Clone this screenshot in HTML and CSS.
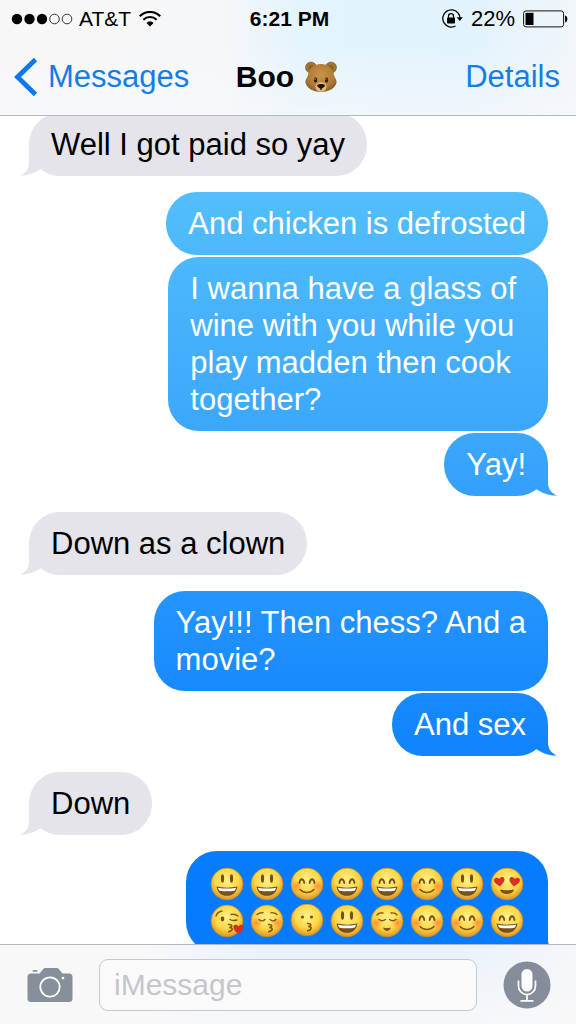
FILE: index.html
```
<!DOCTYPE html>
<html lang="en">
<head>
<meta charset="utf-8">
<meta name="viewport" content="width=device-width, initial-scale=1">
<title>Messages</title>
<link rel="stylesheet" href="styles.css">
</head>
<body>
<svg class="defs" aria-hidden="true">
  <defs>
    <radialGradient id="skin" cx="50%" cy="38%" r="62%">
      <stop offset="0" stop-color="#fff08a"/><stop offset=".6" stop-color="#fdd745"/><stop offset="1" stop-color="#dc9426"/>
    </radialGradient>
    <radialGradient id="blush"><stop offset="0" stop-color="#ff7637" stop-opacity=".75"/><stop offset="1" stop-color="#ff8a37" stop-opacity="0"/></radialGradient>
    <radialGradient id="fur" cx="50%" cy="40%" r="60%"><stop offset="0" stop-color="#c99545"/><stop offset=".7" stop-color="#b17c35"/><stop offset="1" stop-color="#87602c"/></radialGradient>
    <g id="face"><circle cx="17" cy="17" r="16" fill="url(#skin)" stroke="#b98329" stroke-width=".7"/></g>
    <g id="cheeks"><circle cx="6.500" cy="19" r="6" fill="url(#blush)"/><circle cx="27.500" cy="19" r="6" fill="url(#blush)"/></g>
    <g id="arcs" fill="none" stroke="#75501a" stroke-width="1.800" stroke-linecap="round"><path d="M9.500 16c.5-5 4-5 4.800 0M19.700 16c.6-5 4-5 4.800 0"/></g>
    <g id="grin"><path d="M6.500 19.500c7 1.500 14 1.500 21 0-.8 6-5 9.300-10.500 9.300S7.300 25.500 6.500 19.500z" fill="#77501c"/><path d="M8 20.700c6 1.200 12 1.200 18 0-.4 1.800-1 2.700-1.700 3-4.800.8-9.800.8-14.600 0-.8-.4-1.400-1.500-1.700-3z" fill="#fff"/></g>
    <g id="pucker" fill="none" stroke="#81551b" stroke-width="1.500" stroke-linecap="round"><path d="M17.500 20.500c4-.2 4.500 2 .8 3 4 0 4 3-.6 4.200"/></g>
    <path id="heart" d="M0 5C-3 2.500-5.500.5-5.200-2-5-4.600-1.500-5 0-2.400 1.500-5 5-4.600 5.200-2 5.500.5 3 2.500 0 5z" fill="#d92f20"/>
    <symbol id="smiley" viewBox="0 0 34 34"><use href="#face"/><g fill="#75501a"><ellipse cx="12.500" cy="11.500" rx="1.600" ry="4.200"/><ellipse cx="21.500" cy="11.500" rx="1.600" ry="4.200"/></g><use href="#grin"/></symbol>
    <symbol id="laugh" viewBox="0 0 34 34"><use href="#face"/><use href="#arcs"/><use href="#grin"/></symbol>
    <symbol id="blushing" viewBox="0 0 34 34"><use href="#face"/><use href="#cheeks"/><use href="#arcs"/><path d="M10 22.500c4 4 10 4 14 0" fill="none" stroke="#81551b" stroke-width="1.600" stroke-linecap="round"/></symbol>
    <symbol id="hearteyes" viewBox="0 0 34 34"><use href="#face"/><use href="#heart" transform="translate(9.500 14.500) rotate(-8)"/><use href="#heart" transform="translate(24.500 14.500) rotate(8)"/><path d="M10 22.500c4 1 10 1 14 0-1 6-13 6-14 0z" fill="#77501c"/></symbol>
    <symbol id="kissheart" viewBox="0 0 34 34"><use href="#face"/><path d="M6 12c1-3 3-4.500 6-5M21 10.500c3-.8 5-.2 7 1.500M20 15.500c2 1.300 4 1.300 7 .5" fill="none" stroke="#81551b" stroke-width="1.400" stroke-linecap="round"/><ellipse cx="12.500" cy="15" rx="1.800" ry="2.400" fill="#75501a"/><use href="#pucker" transform="translate(1 0)"/><use href="#heart" transform="translate(28.500 25)"/></symbol>
    <symbol id="kissclosed" viewBox="0 0 34 34"><use href="#face"/><use href="#cheeks"/><path d="M7 10.500c2-1.500 4-2 6-1.800M21 8.700c2.500-.2 4.500.4 6 1.800M9 15.500c2 1.600 4.500 1.600 6 0M20 15.500c2 1.600 4.500 1.600 6 0" fill="none" stroke="#81551b" stroke-width="1.400" stroke-linecap="round"/><use href="#pucker" transform="translate(1 0)"/></symbol>
    <symbol id="kiss" viewBox="0 0 34 34"><g transform="translate(0 -1)"><use href="#face"/><circle cx="12.500" cy="14" r="1.600" fill="#75501a"/><circle cx="21.500" cy="14" r="1.600" fill="#75501a"/><use href="#pucker"/></g></symbol>
    <symbol id="relaxed" viewBox="0 0 34 34"><use href="#face"/><use href="#cheeks"/><path d="M7 11c1-1.500 3-2.500 6-2M21 9c3-.5 5 .5 6 2M9 15.500c2 1.600 4.500 1.600 6.500 0M19.500 15.500c2 1.600 4.500 1.600 6.500 0" fill="none" stroke="#81551b" stroke-width="1.400" stroke-linecap="round"/><path d="M13 23.500c2.500.8 5.500.8 8 0-1.500 4.500-6.500 4.500-8 0z" fill="#81551b"/></symbol>
  </defs>
</svg>

<header class="top">
  <div class="status">
    <div class="status-left">
      <svg class="dots" width="62" height="12" viewBox="0 0 62 12" role="img" aria-label="Signal: 3 of 5">
        <circle cx="6" cy="6" r="5.200"/><circle cx="18.500" cy="6" r="5.200"/><circle cx="31" cy="6" r="5.200"/>
        <g fill="none" stroke="#222" stroke-width=".9"><circle cx="43.500" cy="6" r="4.800"/><circle cx="56" cy="6" r="4.800"/></g>
      </svg>
      <span>AT&amp;T</span>
      <svg width="22" height="16" viewBox="0 0 22 16" role="img" aria-label="Wi-Fi">
        <g fill="none" stroke="#000" stroke-width="2.200"><path d="M.8 5.200C6.500-.4 15.500-.4 21.200 5.200M4.400 8.700c3.700-3.600 9.500-3.600 13.200 0"/></g>
        <path d="M7.500 11.900c2-1.900 5-1.900 7 0L11 15.500z"/>
      </svg>
    </div>
    <time class="clock">6:21 PM</time>
    <div class="status-right">
      <svg width="22" height="20" viewBox="0 0 22 20" role="img" aria-label="Rotation locked">
        <path d="M17.200 4.200A8.600 8.600 0 1 0 14.500 17M17.200 4.200c1.300 1.500 1.900 3 1.900 5" fill="none" stroke="#000" stroke-width="1.300"/>
        <path d="M15.600 8.200h6.200l-3 3.800z"/>
        <rect x="6" y="8.600" width="8" height="6" rx=".8"/><path d="M7.500 9V7.200a2.500 2.500 0 0 1 5 0V9" fill="none" stroke="#000" stroke-width="1.300"/>
      </svg>
      <span class="percent">22%</span>
      <svg width="45" height="18" viewBox="0 0 45 18" role="img" aria-label="Battery 22 percent">
        <rect x=".6" y=".9" width="40" height="16" rx="2.500" fill="none" stroke="#111" stroke-width="1"/>
        <rect x="2.500" y="2.800" width="8" height="12.200"/><path d="M42 5.500c3.200.5 3.200 6.500 0 7z"/>
      </svg>
    </div>
  </div>
  <nav class="nav">
    <a class="back" href="#messages">
      <svg width="24" height="38" viewBox="0 0 24 38" aria-hidden="true"><path d="M21.500 1.500L3.500 19l18 17.500" fill="none" stroke="#0a78f0" stroke-width="4.800"/></svg>
      <span>Messages</span>
    </a>
    <h1 class="title">Boo
      <svg width="34" height="32" viewBox="0 0 34 32" role="img" aria-label="Bear">
        <g fill="#a3732f" stroke="#7d5b2c" stroke-width=".6"><circle cx="7" cy="6.500" r="5.500"/><circle cx="27" cy="6.500" r="5.500"/></g>
        <circle cx="7.500" cy="7" r="3" fill="#8f6128"/><circle cx="26.500" cy="7" r="3" fill="#8f6128"/>
        <path d="M17 3c8 0 12 5 13 11 .4 2.500 3 4.500 2.500 7.500-.7 5-7 9.500-15.500 9.500S2.200 26.500 1.500 21.500C1 18.500 3.600 16.500 4 14 5 8 9 3 17 3z" fill="url(#fur)"/>
        <ellipse cx="17" cy="26" rx="5.500" ry="4.800" fill="#dfbd83"/>
        <ellipse cx="11.500" cy="19" rx="1.700" ry="2.700" fill="#32200d"/><ellipse cx="22.500" cy="19" rx="1.700" ry="2.700" fill="#32200d"/>
        <circle cx="11" cy="18" r=".6" fill="#fff"/><circle cx="22" cy="18" r=".6" fill="#fff"/>
        <path d="M13 24c1.500-1.500 6.500-1.500 8 0 0 2-2 3-3.300 3.500V29h-1.400v-1.500C15 27 13 26 13 24z" fill="#21150c"/>
      </svg>
    </h1>
    <a class="details" href="#details">Details</a>
  </nav>
</header>

<main class="thread">
  <p class="bubble in tail">Well I got paid so yay</p>
  <p class="bubble out start">And chicken is defrosted</p>
  <p class="bubble out wrapped">I wanna have a glass of<br>wine with you while you<br>play madden then cook<br>together?</p>
  <p class="bubble out tail">Yay!</p>
  <p class="bubble in tail start">Down as a clown</p>
  <p class="bubble out start">Yay!!! Then chess? And a<br>movie?</p>
  <p class="bubble out tail">And sex</p>
  <p class="bubble in tail start">Down</p>
  <div class="bubble out tail start emojis" role="img" aria-label="Sixteen happy faces">
    <svg><use href="#smiley"/></svg><svg><use href="#smiley"/></svg><svg><use href="#blushing"/></svg><svg><use href="#laugh"/></svg>
    <svg><use href="#laugh"/></svg><svg><use href="#blushing"/></svg><svg><use href="#smiley"/></svg><svg><use href="#hearteyes"/></svg>
    <svg><use href="#kissheart"/></svg><svg><use href="#kissclosed"/></svg><svg><use href="#kiss"/></svg><svg><use href="#smiley"/></svg>
    <svg><use href="#relaxed"/></svg><svg><use href="#blushing"/></svg><svg><use href="#blushing"/></svg><svg><use href="#laugh"/></svg>
  </div>
</main>

<footer class="composer">
  <button class="icon-button" type="button" aria-label="Camera">
    <svg width="46" height="36" viewBox="0 0 46 36">
      <path d="M4 6.500h8.500L16 2.200C16.700 1.300 17.500 1 18.500 1h11c1 0 1.800.3 2.500 1.200l3.500 4.300H42a3.500 3.500 0 0 1 3.500 3.500v21.500A3.500 3.500 0 0 1 42 35H4A3.500 3.500 0 0 1 .5 31.500V10A3.500 3.500 0 0 1 4 6.500zM6.500 3h3q1 0 1 1.700h-5Q5.500 3 6.500 3z" fill="#86909b"/>
      <circle cx="23" cy="20" r="9.700" fill="none" stroke="#fff" stroke-width="1.800"/><circle cx="36" cy="11" r="1.300" fill="#fff"/>
    </svg>
  </button>
  <input class="field" type="text" placeholder="iMessage" aria-label="iMessage">
  <button class="icon-button" type="button" aria-label="Dictate">
    <svg width="48" height="48" viewBox="0 0 48 48">
      <circle cx="24" cy="24" r="23.500" fill="#868d9a"/>
      <rect x="18.500" y="8" width="11" height="22.500" rx="5.500" fill="#fff"/>
      <path d="M15.500 19.500v5.500a8.500 8.500 0 0 0 17 0v-5.500M24 33.500v6M17.500 39.800h13" fill="none" stroke="#fff" stroke-width="1.700"/>
    </svg>
  </button>
</footer>
</body>
</html>
```
FILE: styles.css
```
* {
  box-sizing: border-box;
}

body {
  margin: 0;
  height: 100vh;
  display: flex;
  flex-direction: column;
  background: #fff;
  color: #000;
  font-family: "Liberation Sans", Arial, sans-serif;
}

svg {
  display: block;
  flex: none;
}

.defs {
  position: absolute;
  width: 0;
  height: 0;
}

.top {
  flex: none;
  border-bottom: 1px solid #b5b8bd;
  background:
    linear-gradient(to bottom, rgba(247, 248, 250, 0) 40%, rgba(247, 248, 250, 0.7)),
    linear-gradient(to right, #f7f7f8 0%, #f6f7f8 38%, #e4f4fd 52%, #e2f3fd 82%, #f1f6f9 100%);
}

.status,
.nav {
  display: grid;
  grid-template-columns: 1fr auto 1fr;
  align-items: center;
}

.status {
  height: 38px;
  padding: 0 8px 0 11px;
  font-size: 21px;
}

.status-left,
.status-right {
  display: flex;
  align-items: center;
  gap: 8px;
}

.dots {
  margin-right: -2px;
}

.status-right {
  justify-content: flex-end;
}

.clock {
  font-weight: bold;
}

.percent {
  font-size: 22px;
}

.nav {
  height: 77px;
  padding: 0 16px 0 14px;
  font-size: 31px;
}

.back,
.details {
  color: #157de8;
  text-decoration: none;
}

.back {
  display: flex;
  align-items: center;
  gap: 10px;
}

.details {
  justify-self: end;
}

.title {
  display: flex;
  align-items: center;
  gap: 10px;
  margin: 0;
  font-size: 30px;
}

.thread {
  flex: 1;
  min-height: 0;
  overflow: hidden;
  display: flex;
  flex-direction: column;
  gap: 2px;
  margin: 0;
  padding: 0 28px 0 29px;
}

.bubble {
  position: relative;
  flex: none;
  margin: 0;
  padding: 13px 22px;
  border-radius: 31px;
  font-size: 31px;
  line-height: 37px;
}

.bubble:first-child {
  margin-top: -3px;
}

.wrapped {
  padding-right: 32px;
}

.start {
  margin-top: 14px;
}

.in {
  align-self: flex-start;
  background: #e5e4ea;
}

.out {
  align-self: flex-end;
  color: #fff;
}

.out,
.out::after {
  background: linear-gradient(to bottom, #55c0fa 17%, #39a5fc 44%, #1f90fd 62%, #1083fe 74%, #077bfe 86%, #077bfe) fixed;
}

.tail::after {
  content: "";
  position: absolute;
  right: -9px;
  bottom: 0;
  width: 24px;
  height: 32px;
  clip-path: path("M0 0H15V18C15 25 18 29 24 31.5C17 32 9 29 3 25Z");
}

.in.tail::after {
  right: auto;
  left: -9px;
  background: #e5e4ea;
  clip-path: path("M24 0H9V18C9 25 6 29 0 31.5C7 32 15 29 21 25Z");
}

.emojis {
  display: grid;
  grid-template-columns: repeat(8, 40px);
  grid-auto-rows: 37px;
  align-items: center;
  justify-items: center;
  padding: 14px 21px;
}

.emojis svg {
  width: 34px;
  height: 34px;
}

.composer {
  flex: none;
  display: flex;
  align-items: center;
  gap: 26px;
  height: 80px;
  padding: 0 25px 0 27px;
  border-top: 1px solid #b5b8bd;
  background:
    linear-gradient(to bottom, rgba(248, 248, 249, 0), rgba(248, 248, 249, 0.9)),
    linear-gradient(to right, #f8f8f9 25%, #e8f2fb 45%, #e8f2fb 80%, #f5f6f8);
}

.icon-button {
  padding: 0;
  border: 0;
  background: none;
}

.field {
  flex: 1;
  min-width: 0;
  height: 52px;
  padding: 0 14px;
  border: 1px solid #c5c8ce;
  border-radius: 9px;
  background: #fafafb;
  font: inherit;
  font-size: 30px;
}

.field::placeholder {
  color: #c5c6cb;
  opacity: 1;
}
```
